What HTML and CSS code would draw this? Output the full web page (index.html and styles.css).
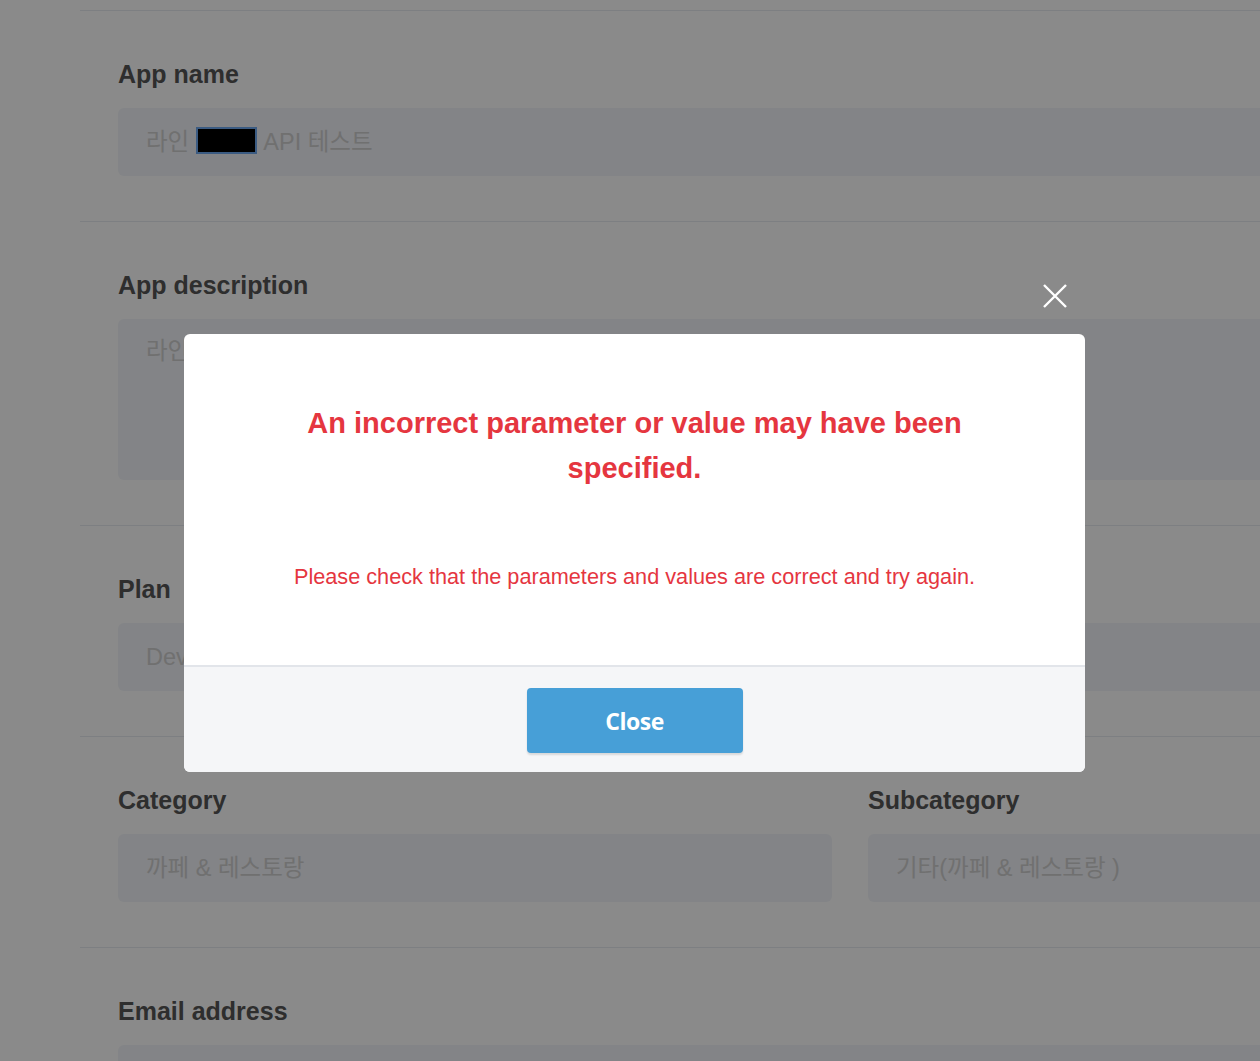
FILE: index.html
```html
<!DOCTYPE html>
<html lang="ko">
<head>
    <meta charset="UTF-8">
    <meta name="viewport" content="width=device-width, initial-scale=1.0">
    <title>App settings</title>
    <link rel="stylesheet" href="styles.css">
</head>
<body>

    <div class="form">
        <div class="section">
            <label class="label">App name</label>
            <div class="field">라인 <span class="redact"></span> API 테스트</div>
        </div>

        <div class="section">
            <label class="label">App description</label>
            <div class="field area">라인 API 테스트</div>
        </div>

        <div class="section">
            <label class="label">Plan</label>
            <div class="field">Developer Trial</div>
        </div>

        <div class="section">
            <div class="cols">
                <div class="col">
                    <label class="label">Category</label>
                    <div class="field">까페 &amp; 레스토랑</div>
                </div>
                <div class="col">
                    <label class="label">Subcategory</label>
                    <div class="field">기타(까페 &amp; 레스토랑 )</div>
                </div>
            </div>
        </div>

        <div class="section">
            <label class="label">Email address</label>
            <div class="field"></div>
        </div>
    </div>

    <div class="overlay">
        <div class="modal">
            <button class="modal-x" aria-label="close">
                <svg width="26" height="26" viewBox="0 0 26 26">
                    <path d="M2 2 L24 24 M24 2 L2 24" stroke="#fff" stroke-width="2.4" fill="none"/>
                </svg>
            </button>
            <div class="modal-body">
                <h3 class="modal-title">An incorrect parameter or value may have been specified.</h3>
                <p class="modal-text">Please check that the parameters and values are correct and try again.</p>
            </div>
            <div class="modal-footer">
                <button class="btn-close">Close</button>
            </div>
        </div>
    </div>

</body>
</html>
```

FILE: styles.css
```css
html, body {
    margin: 0;
    padding: 0;
    height: 100%;
    overflow: hidden;
}
body {
    font-family: "Liberation Sans", "Noto Sans CJK KR", Arial, sans-serif;
    background-color: #fff;
}
.form {
    margin: 10px 0 0 80px;
    width: 1540px;
}
.section {
    border-top: 1px solid #e8ebf1;
    padding: 50px 38px 45px;
}
.label {
    display: block;
    font-size: 25px;
    line-height: 26px;
    font-weight: bold;
    color: #555;
    margin-bottom: 21px;
}
.field {
    height: 68px;
    box-sizing: border-box;
    padding: 0 28px;
    background-color: #f2f4f9;
    border-radius: 6px;
    font-size: 23.5px;
    line-height: 68px;
    color: #cfcfcf;
    white-space: nowrap;
}
.field.area {
    height: 161px;
    line-height: 26px;
    padding-top: 19px;
}
.redact {
    display: inline-block;
    width: 57px;
    height: 23px;
    vertical-align: -4px;
    background-color: #000;
    border: 2px solid #6ea8f0;
}
.cols {
    display: flex;
    gap: 36px;
}
.col {
    flex: 1;
}

/* modal */
.overlay {
    position: fixed;
    inset: 0;
    background-color: rgba(0, 0, 0, 0.46);
}
.modal {
    position: absolute;
    left: 184px;
    top: 334px;
    width: 901px;
    background-color: #fff;
    border-radius: 6px;
}
.modal-x {
    position: absolute;
    right: 17px;
    top: -51px;
    padding: 0;
    border: none;
    background: none;
    width: 26px;
    height: 26px;
    cursor: pointer;
}
.modal-body {
    padding: 67px 40px 74px;
    text-align: center;
}
.modal-title {
    margin: 0 auto;
    max-width: 700px;
    font-size: 29px;
    line-height: 45px;
    font-weight: bold;
    color: #e5363f;
}
.modal-text {
    margin: 72px 0 0;
    font-size: 21.7px;
    line-height: 28px;
    color: #e5363f;
}
.modal-footer {
    border-top: 2px solid #e2e5ea;
    background-color: #f5f6f8;
    padding: 21px 0 19px;
    text-align: center;
    border-radius: 0 0 6px 6px;
}
.btn-close {
    width: 216px;
    height: 65px;
    border: none;
    border-radius: 4px;
    background-color: #479fd7;
    box-shadow: 0 2px 2px rgba(0, 0, 0, 0.12);
    color: #fff;
    font-family: "Open Sans", sans-serif;
    font-size: 23px;
    font-weight: bold;
    letter-spacing: -0.5px;
    cursor: pointer;
}
```
